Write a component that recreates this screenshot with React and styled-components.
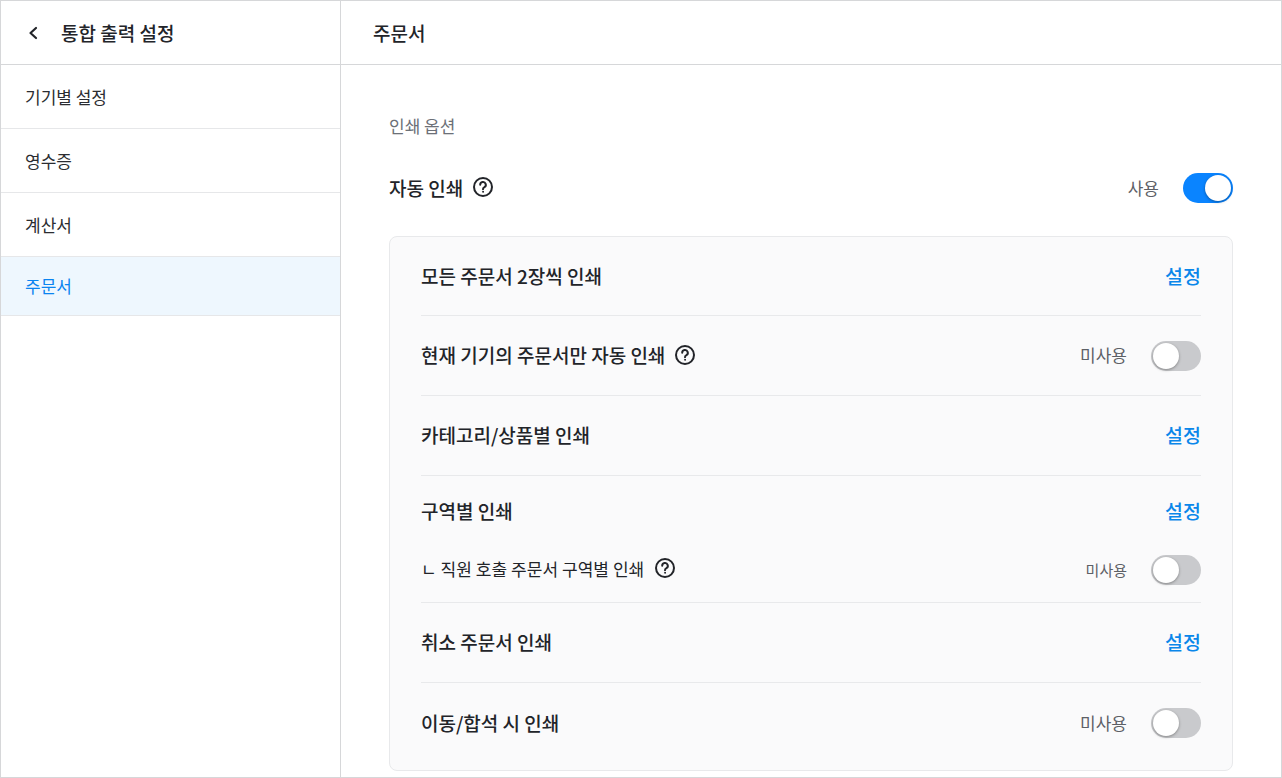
import React from "react";
import styled, { createGlobalStyle } from "styled-components";

const Global = createGlobalStyle`
  html, body { margin: 0; padding: 0; background: #fff; }
  body { font-family: "Noto Sans CJK KR", "Inter", sans-serif; }
  * { box-sizing: border-box; }
`;

const Frame = styled.div`
  width: 1282px;
  height: 778px;
  border: 1px solid #d6d7d9;
  display: grid;
  grid-template-columns: 339px 1px 1fr;
  overflow: hidden;
  background: #fff;
`;
const VLine = styled.div`background: #d6d7d9;`;
const Side = styled.aside`display: flex; flex-direction: column;`;
const Main = styled.main`display: flex; flex-direction: column; min-width: 0;`;
const SideHeader = styled.header`
  height: 64px;
  border-bottom: 1px solid #d6d7d9;
  display: flex;
  align-items: center;
  padding: 0 0 0 25px;
  gap: 21px;
  color: #222429;
`;
const MainHeader = styled.header`
  height: 64px;
  border-bottom: 1px solid #d6d7d9;
  display: flex;
  align-items: center;
  padding-left: 32px;
`;
const HeaderTitle = styled.h1`
  margin: 0;
  font-size: 19px;
  font-weight: 500;
  color: #222429;
`;
const NavItem = styled.div`
  height: ${p => (p.$active ? "59px" : "64px")};
  padding: ${p => (p.$active ? "0 0 2px 24px" : "0 0 0 24px")};
  border-bottom: 1px solid #e6e7e9;
  display: flex;
  align-items: center;
  font-size: 17px;
  color: ${p => (p.$active ? "#0a84f0" : "#2b2d31")};
  background: ${p => (p.$active ? "#eef7fe" : "#fff")};
`;
const Content = styled.div`
  flex: 1;
  padding: 49px 48px 0;
  display: flex;
  flex-direction: column;
`;
const SectionLabel = styled.div`
  height: 24px;
  line-height: 24px;
  font-size: 17px;
  color: #6c7077;
`;
const TopRow = styled.div`
  display: flex;
  align-items: center;
  justify-content: space-between;
  height: 30px;
  margin-top: 35px;
  margin-bottom: 33px;
`;
const Label = styled.div`
  display: flex;
  align-items: center;
  gap: ${p => (p.$sub ? "10px" : "9px")};
  padding-bottom: ${p => (p.$sub ? "4px" : "2px")};
  font-size: ${p => (p.$sub ? "17px" : "19px")};
  font-weight: ${p => (p.$sub ? 400 : 500)};
  letter-spacing: ${p => (p.$sub ? "0.05px" : "0")};
  color: #222429;
`;
const Card = styled.section`
  background: #fafafb;
  border: 1px solid #e8e9eb;
  border-radius: 8px;
  padding: 0 31px 7px;
  height: 535px;
`;
const Row = styled.div`
  display: flex;
  align-items: center;
  justify-content: space-between;
  height: ${p => p.$h}px;
  border-bottom: ${p => (p.$last ? "none" : "1px solid #e8e9eb")};
`;
const GroupRow = styled.div`
  height: 127px;
  border-bottom: 1px solid #e8e9eb;
  display: flex;
  flex-direction: column;
`;
const GroupLine = styled.div`
  display: flex;
  align-items: center;
  justify-content: space-between;
  height: ${p => p.$h}px;
`;
const Action = styled.a`
  font-size: 19.5px;
  font-weight: 500;
  padding-bottom: 2px;
  color: #0a87ea;
`;
const Control = styled.div`
  display: flex;
  align-items: center;
  gap: 24px;
`;
const State = styled.span`
  font-size: ${p => (p.$small ? "15px" : "17px")};
  padding-bottom: 2px;
  color: #5d6066;
`;
const Track = styled.div`
  width: 50px;
  height: 30px;
  border-radius: 15px;
  padding: 2px;
  display: flex;
  justify-content: ${p => (p.$on ? "flex-end" : "flex-start")};
  background: ${p => (p.$on ? "#0a84ff" : "#c9cacd")};
`;
const Knob = styled.div`
  width: 26px;
  height: 26px;
  border-radius: 50%;
  background: #fff;
  box-shadow: 0 1px 3px rgba(0, 0, 0, 0.35);
`;

const Help = () => (
  <svg width="22" height="22" viewBox="0 0 22 22" fill="none" stroke="#222429" strokeWidth="2" strokeLinecap="round" strokeLinejoin="round">
    <circle cx="11" cy="11" r="9" />
    <path d="M8.2 8.8a2.8 2.8 0 1 1 4.2 2.4c-1 .5-1.4 1-1.4 2" />
    <circle cx="11" cy="15.8" r="0.5" fill="#222429" strokeWidth="1" />
  </svg>
);

const Back = () => (
  <svg width="14" height="14" viewBox="0 0 14 14" fill="none" stroke="#222429" strokeWidth="2.2" strokeLinecap="round" strokeLinejoin="round">
    <path d="M10 2 4.5 7l5.5 5" />
  </svg>
);

const Toggle = ({ label, on, small }) => (
  <Control>
    <State $small={small}>{label}</State>
    <Track $on={on}><Knob /></Track>
  </Control>
);

export default function App() {
  return (
    <>
      <Global />
      <Frame>
        <Side>
          <SideHeader><Back /><HeaderTitle>통합 출력 설정</HeaderTitle></SideHeader>
          <NavItem>기기별 설정</NavItem>
          <NavItem>영수증</NavItem>
          <NavItem>계산서</NavItem>
          <NavItem $active>주문서</NavItem>
        </Side>
        <VLine />
        <Main>
          <MainHeader><HeaderTitle>주문서</HeaderTitle></MainHeader>
          <Content>
            <SectionLabel>인쇄 옵션</SectionLabel>
            <TopRow>
              <Label>자동 인쇄 <Help /></Label>
              <Toggle label="사용" on />
            </TopRow>
            <Card>
              <Row $h={79}><Label>모든 주문서 2장씩 인쇄</Label><Action>설정</Action></Row>
              <Row $h={80}><Label>현재 기기의 주문서만 자동 인쇄 <Help /></Label><Toggle label="미사용" /></Row>
              <Row $h={80}><Label>카테고리/상품별 인쇄</Label><Action>설정</Action></Row>
              <GroupRow>
                <GroupLine $h={70}><Label>구역별 인쇄</Label><Action>설정</Action></GroupLine>
                <GroupLine $h={48}><Label $sub>ㄴ 직원 호출 주문서 구역별 인쇄 <Help /></Label><Toggle small label="미사용" /></GroupLine>
              </GroupRow>
              <Row $h={80}><Label>취소 주문서 인쇄</Label><Action>설정</Action></Row>
              <Row $h={80} $last><Label>이동/합석 시 인쇄</Label><Toggle label="미사용" /></Row>
            </Card>
          </Content>
        </Main>
      </Frame>
    </>
  );
}
